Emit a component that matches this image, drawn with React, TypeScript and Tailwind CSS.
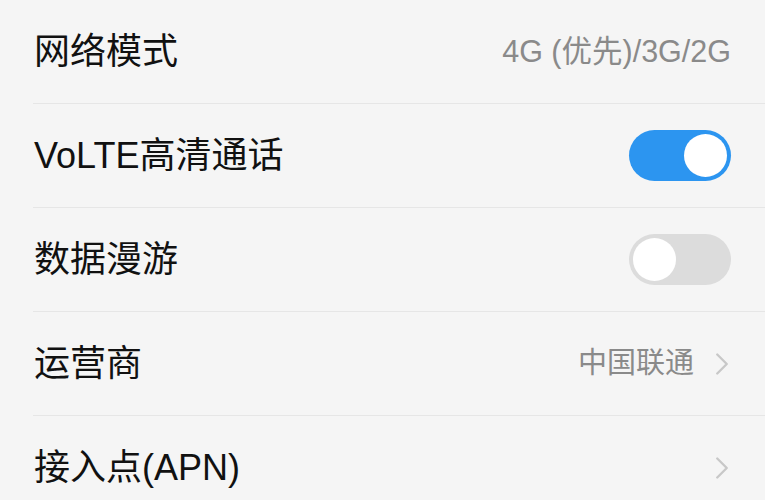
import { ChevronRight } from "lucide-react";

type Row = {
  label: string;
  value?: string;
  toggle?: boolean;
  chevron?: boolean;
};

const rows: Row[] = [
  { label: "网络模式", value: "4G (优先)/3G/2G" },
  { label: "VoLTE高清通话", toggle: true },
  { label: "数据漫游", toggle: false },
  { label: "运营商", value: "中国联通", chevron: true },
  { label: "接入点(APN)", chevron: true },
];

function Toggle({ on }: { on: boolean }) {
  return (
    <div
      className={`flex h-[51px] w-[102px] items-center rounded-full px-[4px] ${
        on ? "justify-end bg-[#2c95f0]" : "justify-start bg-[#dcdcdc]"
      }`}
    >
      <div className="h-[43px] w-[43px] rounded-full bg-white" />
    </div>
  );
}

export default function App() {
  return (
    <div
      className="h-[500px] w-[765px] overflow-hidden bg-[#f5f5f5]"
      style={{ fontFamily: '"Liberation Sans", "Noto Sans CJK SC", sans-serif' }}
    >
      <div className="flex flex-col">
        {rows.map((row, i) => (
          <div key={i} className="flex flex-col">
            <div className="flex h-[103px] items-center justify-between pl-[34px] pr-[34px]">
              <span className="text-[36px] leading-none text-[#111111]">
                {row.label}
              </span>
              <div className="flex items-center">
                {row.value && (
                  <span
                    className={`leading-none text-[#8a8a8a] ${
                      row.chevron ? "text-[29px]" : "text-[30.5px]"
                    }`}
                  >
                    {row.value}
                  </span>
                )}
                {row.toggle !== undefined && <Toggle on={row.toggle} />}
                {row.chevron && (
                  <ChevronRight
                    className="ml-[9px] -mr-[10px] h-[38px] w-[38px] text-[#c8c8c8]"
                    strokeWidth={1.5}
                  />
                )}
              </div>
            </div>
            {i < rows.length - 1 && (
              <div className="ml-[33px] h-px bg-[#e6e6e6]" />
            )}
          </div>
        ))}
      </div>
    </div>
  );
}
